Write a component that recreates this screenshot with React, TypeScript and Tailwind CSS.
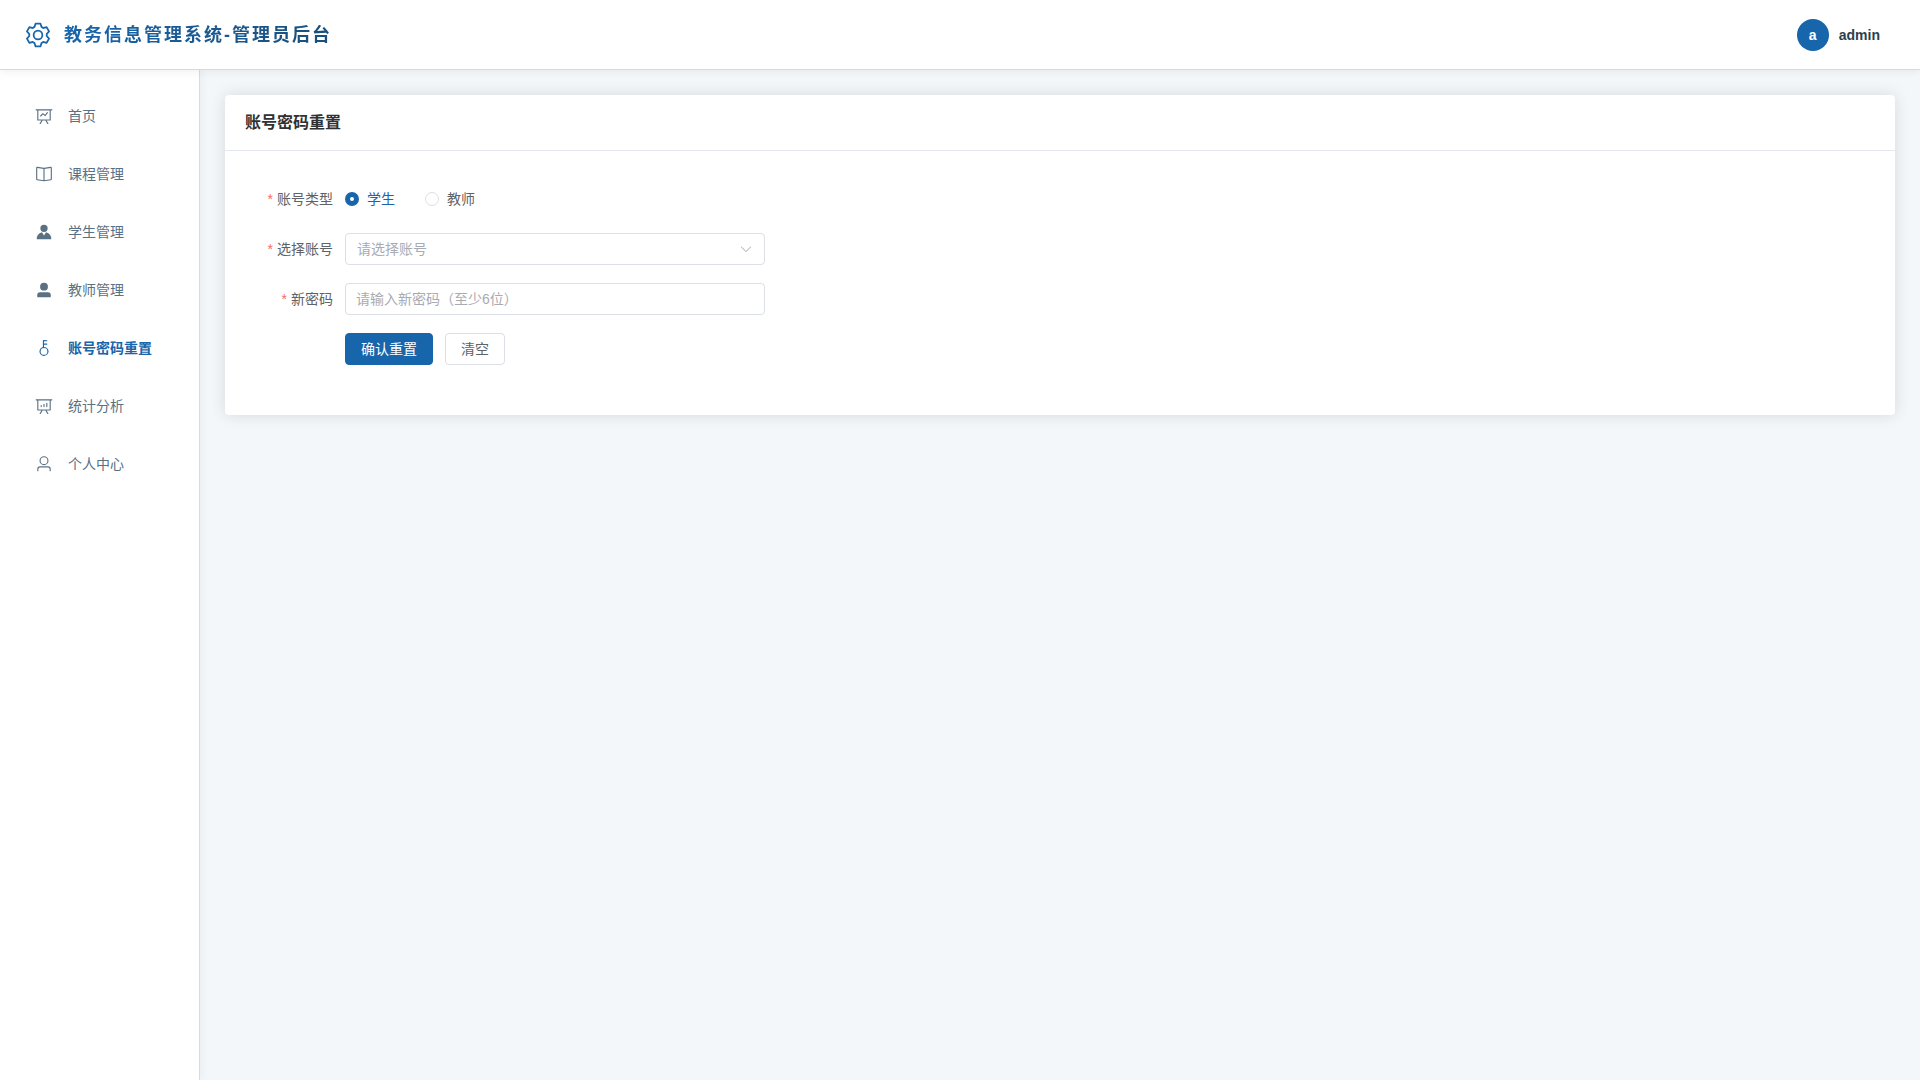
import { useState } from "react";
import type { FormEvent, ReactNode } from "react";

interface IconProps {
  path: string;
  className?: string;
}

function Icon({ path, className }: IconProps) {
  return (
    <svg viewBox="0 0 1024 1024" fill="currentColor" aria-hidden="true" className={className}>
      <path d={path} />
    </svg>
  );
}

const icons = {
  setting:
    "M600.704 64a32 32 0 0 1 30.464 22.208l35.2 109.376c14.784 7.232 28.928 15.36 42.432 24.512l112.384-24.192a32 32 0 0 1 34.432 15.36L944.32 364.8a32 32 0 0 1-4.032 37.504l-77.12 85.12a357.12 357.12 0 0 1 0 49.024l77.12 85.248a32 32 0 0 1 4.032 37.504l-88.704 153.6a32 32 0 0 1-34.432 15.296L708.8 803.904c-13.44 9.088-27.648 17.28-42.368 24.512l-35.264 109.376A32 32 0 0 1 600.704 960H423.296a32 32 0 0 1-30.464-22.208L357.696 828.48a351.616 351.616 0 0 1-42.56-24.64l-112.32 24.256a32 32 0 0 1-34.432-15.36L79.68 659.2a32 32 0 0 1 4.032-37.504l77.12-85.248a357.12 357.12 0 0 1 0-48.896l-77.12-85.248A32 32 0 0 1 79.68 364.8l88.704-153.6a32 32 0 0 1 34.432-15.296l112.32 24.256c13.568-9.152 27.776-17.408 42.56-24.64l35.2-109.312A32 32 0 0 1 423.232 64H600.64zm-23.424 64H446.72l-36.352 113.088-24.512 11.968a294.113 294.113 0 0 0-34.816 20.096l-22.656 15.36-116.224-25.088-65.28 113.152 79.68 88.192-1.92 27.136a293.12 293.12 0 0 0 0 40.192l1.92 27.136-79.808 88.192 65.344 113.152 116.224-25.024 22.656 15.296a294.113 294.113 0 0 0 34.816 20.096l24.512 11.968L446.72 896h130.688l36.48-113.152 24.448-11.904a288.282 288.282 0 0 0 34.752-20.096l22.592-15.296 116.288 25.024 65.28-113.152-79.744-88.192 1.92-27.136a293.12 293.12 0 0 0 0-40.256l-1.92-27.136 79.808-88.128-65.344-113.152-116.288 24.96-22.592-15.232a287.616 287.616 0 0 0-34.752-20.096l-24.448-11.904L577.344 128zM512 320a192 192 0 1 1 0 384 192 192 0 0 1 0-384m0 64a128 128 0 1 0 0 256 128 128 0 0 0 0-256",
  dataLine:
    "M359.168 768H160a32 32 0 0 1-32-32V192H64a32 32 0 0 1 0-64h896a32 32 0 1 1 0 64h-64v544a32 32 0 0 1-32 32H665.216l110.848 192h-74.88L591.36 768H433.024L323.2 960H248.32zM832 192H192v512h640zM342.656 534.656a32 32 0 1 1-45.312-45.312L444.992 341.76l125.44 94.08L679.04 300.032a32 32 0 1 1 49.92 39.936L581.632 524.224 451.008 426.24 342.656 534.592z",
  reading:
    "m512 863.36 384-54.848v-638.72L525.568 222.72a96 96 0 0 1-27.136 0L128 169.792v638.72zM137.024 106.432l370.432 52.928a32 32 0 0 0 9.088 0l370.432-52.928A64 64 0 0 1 960 169.792v638.72a64 64 0 0 1-54.976 63.36l-388.48 55.488a32 32 0 0 1-9.088 0l-388.48-55.488A64 64 0 0 1 64 808.512v-638.72a64 64 0 0 1 73.024-63.36zM480 192h64v704h-64z",
  avatar:
    "M628.736 528.896A416 416 0 0 1 928 928H96a415.872 415.872 0 0 1 299.264-399.104L512 704zM720 304a208 208 0 1 1-416 0 208 208 0 0 1 416 0",
  userFilled:
    "M288 320a224 224 0 1 0 448 0 224 224 0 1 0-448 0m544 608H160a32 32 0 0 1-32-32v-96a160 160 0 0 1 160-160h448a160 160 0 0 1 160 160v96a32 32 0 0 1-32 32z",
  key: "M448 456.064V96a32 32 0 0 1 32-32.064L672 64a32 32 0 0 1 0 64H512v128h160a32 32 0 0 1 0 64H512v128a256 256 0 1 1-64 8.064M512 896a192 192 0 1 0 0-384 192 192 0 0 0 0 384",
  dataAnalysis:
    "m665.216 768 110.848 192h-74.88L591.36 768H433.024L323.2 960H248.32l110.848-192H160a32 32 0 0 1-32-32V192H64a32 32 0 0 1 0-64h896a32 32 0 1 1 0 64h-64v544a32 32 0 0 1-32 32zM832 192H192v512h640zM352 448a32 32 0 0 1 32 32v64a32 32 0 0 1-64 0v-64a32 32 0 0 1 32-32m160-64a32 32 0 0 1 32 32v128a32 32 0 0 1-64 0V416a32 32 0 0 1 32-32m160-64a32 32 0 0 1 32 32v192a32 32 0 1 1-64 0V352a32 32 0 0 1 32-32",
  user: "M512 512a192 192 0 1 0 0-384 192 192 0 0 0 0 384m0 64a256 256 0 1 1 0-512 256 256 0 0 1 0 512m320 320v-96a96 96 0 0 0-96-96H288a96 96 0 0 0-96 96v96a32 32 0 1 1-64 0v-96a160 160 0 0 1 160-160h448a160 160 0 0 1 160 160v96a32 32 0 1 1-64 0",
  arrowDown:
    "M831.872 340.864 512 652.672 192.128 340.864a30.592 30.592 0 0 0-42.752 0 29.12 29.12 0 0 0 0 41.6L489.664 714.24a32 32 0 0 0 44.672 0l340.288-331.712a29.12 29.12 0 0 0 0-41.728 30.592 30.592 0 0 0-42.752 0z",
};

const menu = [
  { label: "首页", href: "#home", icon: icons.dataLine },
  { label: "课程管理", href: "#courses", icon: icons.reading },
  { label: "学生管理", href: "#students", icon: icons.avatar },
  { label: "教师管理", href: "#teachers", icon: icons.userFilled },
  { label: "账号密码重置", href: "#reset-password", icon: icons.key },
  { label: "统计分析", href: "#statistics", icon: icons.dataAnalysis },
  { label: "个人中心", href: "#profile", icon: icons.user },
];

function Header() {
  return (
    <header className="z-10 flex h-[70px] shrink-0 items-center justify-between border-b border-[#d0dce8] bg-white pr-10 pl-6 shadow-[0_2px_8px_rgba(0,0,0,0.06)]">
      <div className="flex items-center gap-3">
        <Icon path={icons.setting} className="size-7 text-[#1765ab]" />
        <h1 className="bg-linear-to-r from-[#1765ab] to-[#1a4f7a] bg-clip-text text-lg font-bold tracking-[2px] text-transparent">
          教务信息管理系统-管理员后台
        </h1>
      </div>
      <div className="flex items-center gap-2.5">
        <span className="flex size-8 items-center justify-center rounded-full bg-[#1765ab] font-bold text-white">a</span>
        <span className="font-bold text-[#2c3e50]">admin</span>
      </div>
    </header>
  );
}

function Sidebar({ active }: { active: string }) {
  return (
    <nav className="w-[200px] shrink-0 border-r border-[#d0dce8] bg-white px-3 py-[21px] shadow-[2px_0_8px_rgba(0,0,0,0.04)]">
      <ul className="flex flex-col gap-2">
        {menu.map((item) => (
          <li key={item.label}>
            <a
              href={item.href}
              className={`flex h-[50px] items-center gap-3 pl-5 ${
                item.label === active ? "font-bold text-[#1765ab]" : "text-[#5a7184]"
              }`}
            >
              <span className="flex w-6 justify-center">
                <Icon path={item.icon} className="size-[18px]" />
              </span>
              {item.label}
            </a>
          </li>
        ))}
      </ul>
    </nav>
  );
}

interface FieldProps {
  label: string;
  htmlFor: string;
  children: ReactNode;
}

function Field({ label, htmlFor, children }: FieldProps) {
  return (
    <div className="flex h-8 items-center gap-3">
      <label htmlFor={htmlFor} className="flex w-[88px] shrink-0 justify-end gap-1">
        <span className="text-[#f56c6c]">*</span>
        {label}
      </label>
      {children}
    </div>
  );
}

export default function App() {
  const [type, setType] = useState("student");
  const [account, setAccount] = useState("");
  const [password, setPassword] = useState("");

  const clear = () => {
    setAccount("");
    setPassword("");
  };

  const submit = (e: FormEvent) => {
    e.preventDefault();
    clear();
  };

  return (
    <div
      lang="zh-CN"
      className="flex min-h-screen flex-col bg-[#f3f7fa] font-['Liberation_Sans','Noto_Sans_CJK_SC',sans-serif] text-sm"
    >
      <Header />
      <div className="flex grow">
        <Sidebar active="账号密码重置" />
        <main className="grow p-[25px]">
          <section className="rounded bg-white text-[#606266] shadow-[0_0_16px_rgba(0,0,0,0.12)]">
            <h2 className="flex h-14 items-center border-b border-[#e4e7ed] px-5 text-base font-bold text-[#303133]">
              账号密码重置
            </h2>
            <form onSubmit={submit} className="flex w-[540px] flex-col gap-[18px] pt-8 pb-[50px] pl-5">
              <Field label="账号类型" htmlFor="type-student">
                <div className="flex items-center gap-[30px]">
                  {[
                    { value: "student", text: "学生" },
                    { value: "teacher", text: "教师" },
                  ].map((option) => (
                    <label
                      key={option.value}
                      className={`flex items-center gap-2 ${type === option.value ? "text-[#1765ab]" : ""}`}
                    >
                      <input
                        type="radio"
                        id={`type-${option.value}`}
                        name="type"
                        value={option.value}
                        checked={type === option.value}
                        onChange={() => setType(option.value)}
                        className="size-3.5 appearance-none rounded-full border border-[#dcdfe6] bg-white checked:border-5 checked:border-[#1765ab]"
                      />
                      {option.text}
                    </label>
                  ))}
                </div>
              </Field>
              <Field label="选择账号" htmlFor="account">
                <div className="relative grow">
                  <select
                    id="account"
                    value={account}
                    onChange={(e) => setAccount(e.target.value)}
                    className="block h-8 w-full appearance-none rounded border border-[#dcdfe6] bg-white px-[11px] text-[#a8abb2] outline-none"
                  >
                    <option value="">请选择账号</option>
                  </select>
                  <Icon
                    path={icons.arrowDown}
                    className="pointer-events-none absolute top-[9px] right-3 size-3.5 text-[#a8abb2]"
                  />
                </div>
              </Field>
              <Field label="新密码" htmlFor="password">
                <input
                  type="password"
                  id="password"
                  value={password}
                  onChange={(e) => setPassword(e.target.value)}
                  placeholder="请输入新密码（至少6位）"
                  className="h-8 grow rounded border border-[#dcdfe6] bg-white px-2.5 outline-none placeholder:text-[#a8abb2]"
                />
              </Field>
              <div className="flex gap-3 pl-[100px]">
                <button type="submit" className="h-8 rounded border border-[#1765ab] bg-[#1765ab] px-[15px] text-white">
                  确认重置
                </button>
                <button type="button" onClick={clear} className="h-8 rounded border border-[#dcdfe6] bg-white px-[15px]">
                  清空
                </button>
              </div>
            </form>
          </section>
        </main>
      </div>
    </div>
  );
}
